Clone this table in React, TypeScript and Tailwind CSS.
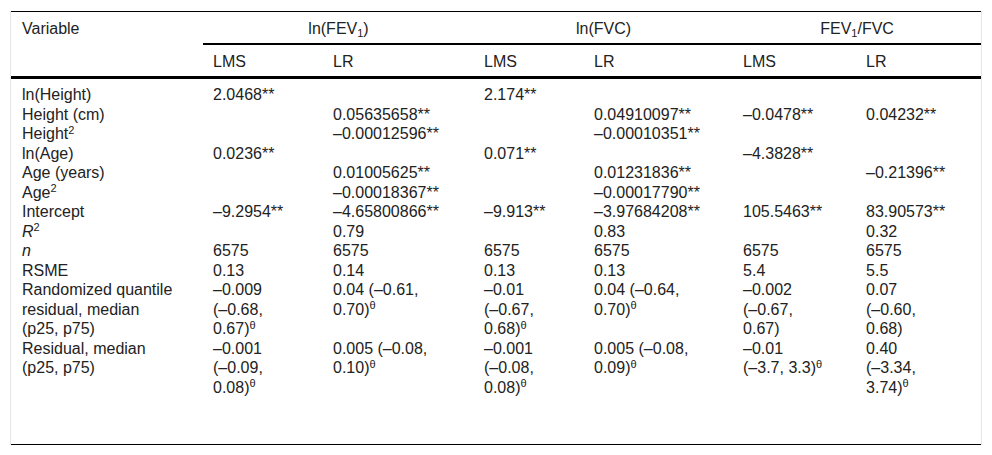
import React from "react";

type Cell = React.ReactNode;

// en dash as minus, with a word joiner so the line never breaks after it
const m = "–\u2060";
const T = () => <sup className="text-[11px]">θ</sup>;

const rows: { label: Cell; cells: Cell[] }[] = [
  { label: "ln(Height)", cells: ["2.0468**", "", "2.174**", "", "", ""] },
  { label: "Height (cm)", cells: ["", "0.05635658**", "", "0.04910097**", `${m}0.0478**`, "0.04232**"] },
  {
    label: <>Height<sup className="text-[11px]">2</sup></>,
    cells: ["", `${m}0.00012596**`, "", `${m}0.00010351**`, "", ""],
  },
  { label: "ln(Age)", cells: ["0.0236**", "", "0.071**", "", `${m}4.3828**`, ""] },
  { label: "Age (years)", cells: ["", "0.01005625**", "", "0.01231836**", "", `${m}0.21396**`] },
  {
    label: <>Age<sup className="text-[11px]">2</sup></>,
    cells: ["", `${m}0.00018367**`, "", `${m}0.00017790**`, "", ""],
  },
  {
    label: "Intercept",
    cells: [`${m}9.2954**`, `${m}4.65800866**`, `${m}9.913**`, `${m}3.97684208**`, "105.5463**", "83.90573**"],
  },
  {
    label: <><i>R</i><sup className="text-[11px]">2</sup></>,
    cells: ["", "0.79", "", "0.83", "", "0.32"],
  },
  { label: <i>n</i>, cells: ["6575", "6575", "6575", "6575", "6575", "6575"] },
  { label: "RSME", cells: ["0.13", "0.14", "0.13", "0.13", "5.4", "5.5"] },
  {
    label: "Randomized quantile residual, median (p25, p75)",
    cells: [
      <>{m}0.009 ({m}0.68, 0.67)<T /></>,
      <>0.04 ({m}0.61, 0.70)<T /></>,
      <>{m}0.01 ({m}0.67, 0.68)<T /></>,
      <>0.04 ({m}0.64, 0.70)<T /></>,
      <>{m}0.002 ({m}0.67, 0.67)</>,
      <>0.07 ({m}0.60, 0.68)</>,
    ],
  },
  {
    label: "Residual, median (p25, p75)",
    cells: [
      <>{m}0.001 ({m}0.09, 0.08)<T /></>,
      <>0.005 ({m}0.08, 0.10)<T /></>,
      <>{m}0.001 ({m}0.08, 0.08)<T /></>,
      <>0.005 ({m}0.08, 0.09)<T /></>,
      <>{m}0.01 ({m}3.7, 3.3)<T /></>,
      <>0.40 ({m}3.34, 3.74)<T /></>,
    ],
  },
];

const widths = ["w-[192px]", "w-[120px]", "w-[151px]", "w-[110px]", "w-[149px]", "w-[123px]", "w-[125px]"];

export default function App() {
  return (
    <div className="bg-white min-h-[455px] pt-[11px] px-[10px] font-['Liberation_Sans',Arial,sans-serif] text-[16px] text-[#222]">
      <div className="border-x border-[#e6e6e6]">
        <table className="w-[970px] table-fixed border-collapse border-t border-b border-black leading-[19.5px]">
          <colgroup>
            {widths.map((w, i) => (
              <col key={i} className={w} />
            ))}
          </colgroup>
          <thead>
            <tr>
              <th rowSpan={2} className="text-left font-normal align-top pl-[11px] pt-[7px]">
                Variable
              </th>
              <th colSpan={2} className="font-normal pt-[7px] pb-[4px] border-b-2 border-black">
                ln(FEV<sub className="text-[11px]">1</sub>)
              </th>
              <th colSpan={2} className="font-normal pt-[7px] pb-[4px] border-b-2 border-black">
                ln(FVC)
              </th>
              <th colSpan={2} className="font-normal pt-[7px] pb-[4px] border-b-2 border-black">
                FEV<sub className="text-[11px]">1</sub>/FVC
              </th>
            </tr>
            <tr className="border-b-[3px] border-black">
              {["LMS", "LR", "LMS", "LR", "LMS", "LR"].map((h, i) => (
                <th key={i} className="text-left font-normal pl-[10px] pt-[7px] pb-[5px]">
                  {h}
                </th>
              ))}
            </tr>
          </thead>
          <tbody>
            {rows.map((r, ri) => {
              const pad = ri === 0 ? "pt-[6px]" : ri === rows.length - 1 ? "pb-[47px]" : "";
              return (
                <tr key={ri}>
                  <td className={`align-top pl-[11px] pr-[30px] ${pad}`}>{r.label}</td>
                  {r.cells.map((c, ci) => (
                    <td key={ci} className={`align-top pl-[10px] pr-[30px] ${pad}`}>
                      {c}
                    </td>
                  ))}
                </tr>
              );
            })}
          </tbody>
        </table>
      </div>
    </div>
  );
}
